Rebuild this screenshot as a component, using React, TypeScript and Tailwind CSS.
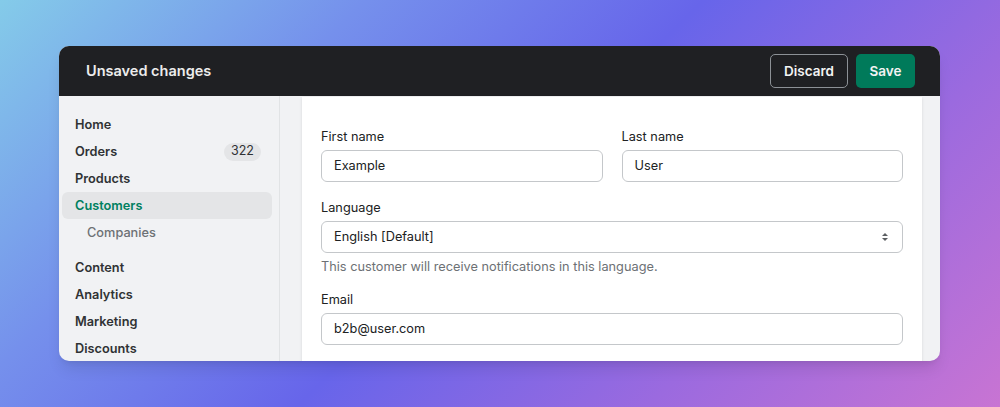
import React from "react";

const navTop = [
  { label: "Home" },
  { label: "Orders", badge: "322" },
  { label: "Products" },
  { label: "Customers", active: true },
  { label: "Companies", sub: true },
];

const navBottom = ["Content", "Analytics", "Marketing", "Discounts"];

function SelectArrows() {
  return (
    <svg width="8" height="12" viewBox="0 0 8 12" className="text-[#5c5f62]">
      <path d="M4 2 L7 5 H1 Z" fill="currentColor" />
      <path d="M4 10 L7 7 H1 Z" fill="currentColor" />
    </svg>
  );
}

export default function App() {
  return (
    <div
      className="w-[1000px] h-[407px] overflow-hidden bg-[linear-gradient(135deg,#84cbe9_0%,#7590ec_26%,#6765ea_50%,#9b6adf_75%,#c874d3_100%)] pt-[46px] pl-[59px]"
      style={{ fontFamily: "Inter, 'Noto Sans', sans-serif" }}
    >
      <div className="w-[881px] h-[315px] rounded-[10px] overflow-hidden flex flex-col shadow-lg bg-[#f1f2f4]">
        {/* top bar */}
        <header className="h-[50px] shrink-0 bg-[#1f2023] flex items-center justify-between pl-[27px] pr-[25px]">
          <h1 className="text-[14.5px] font-semibold text-[#ececec]">Unsaved changes</h1>
          <div className="flex items-center gap-2">
            <button className="h-[34px] w-[78px] rounded-[5px] border border-[#8c9196] text-[#f3f3f3] text-[13.5px] font-semibold">
              Discard
            </button>
            <button className="h-[34px] w-[59px] rounded-[5px] bg-[#007a5a] text-[#f3f3f3] text-[13.5px] font-semibold">
              Save
            </button>
          </div>
        </header>

        <div className="flex flex-1 min-h-0">
          {/* sidebar */}
          <nav className="w-[221px] shrink-0 border-r border-[#e1e3e5] pt-[15px] px-[3px] text-[12.75px] font-semibold">
            <div className="w-[210px]">
              {navTop.map((item) => (
                <div
                  key={item.label}
                  className={`h-[27px] flex items-center justify-between rounded-md pr-[11px] ${
                    item.sub ? "pl-[25px]" : "pl-[13px]"
                  } ${item.active ? "bg-[#e4e5e7]" : ""}`}
                >
                  <span
                    className={
                      item.active
                        ? "text-[#008060]"
                        : item.sub
                        ? "text-[#6d7175] font-medium"
                        : "text-[#303234]"
                    }
                  >
                    {item.label}
                  </span>
                  {item.badge && (
                    <span className="h-[18px] w-[37px] justify-center rounded-full bg-[#e4e5e7] text-[12.5px] font-normal text-[#303234] flex items-center">
                      {item.badge}
                    </span>
                  )}
                </div>
              ))}
              <div className="mt-2">
                {navBottom.map((label) => (
                  <div key={label} className="h-[27px] flex items-center pl-[13px] text-[#303234]">
                    {label}
                  </div>
                ))}
              </div>
            </div>
          </nav>

          {/* main */}
          <main className="flex-1 pl-[22px] pr-[18px] pt-px">
            <div className="bg-white h-full shadow-sm px-[19px] pt-[30px] text-[12.75px] text-[#202223]">
              <div className="grid grid-cols-2 gap-[19px]">
                <label className="block">
                  <div className="h-5 leading-5 mb-[3px]">First name</div>
                  <div className="h-[32px] rounded-md border border-[#c4c7ca] flex items-center px-3">Example</div>
                </label>
                <label className="block">
                  <div className="h-5 leading-5 mb-[3px]">Last name</div>
                  <div className="h-[32px] rounded-md border border-[#c4c7ca] flex items-center px-3">User</div>
                </label>
              </div>

              <div className="mt-4">
                <div className="h-5 leading-5 mb-[3px]">Language</div>
                <div className="h-[32px] rounded-md border border-[#c4c7ca] flex items-center justify-between pl-3 pr-[13px]">
                  <span>English [Default]</span>
                  <SelectArrows />
                </div>
                <div className="h-5 leading-5 mt-1 text-[#6d7175]">
                  This customer will receive notifications in this language.
                </div>
              </div>

              <div className="mt-[13px]">
                <div className="h-5 leading-5 mb-[3px]">Email</div>
                <div className="h-[32px] rounded-md border border-[#c4c7ca] flex items-center px-3">b2b@user.com</div>
              </div>
            </div>
          </main>
        </div>
      </div>
    </div>
  );
}
